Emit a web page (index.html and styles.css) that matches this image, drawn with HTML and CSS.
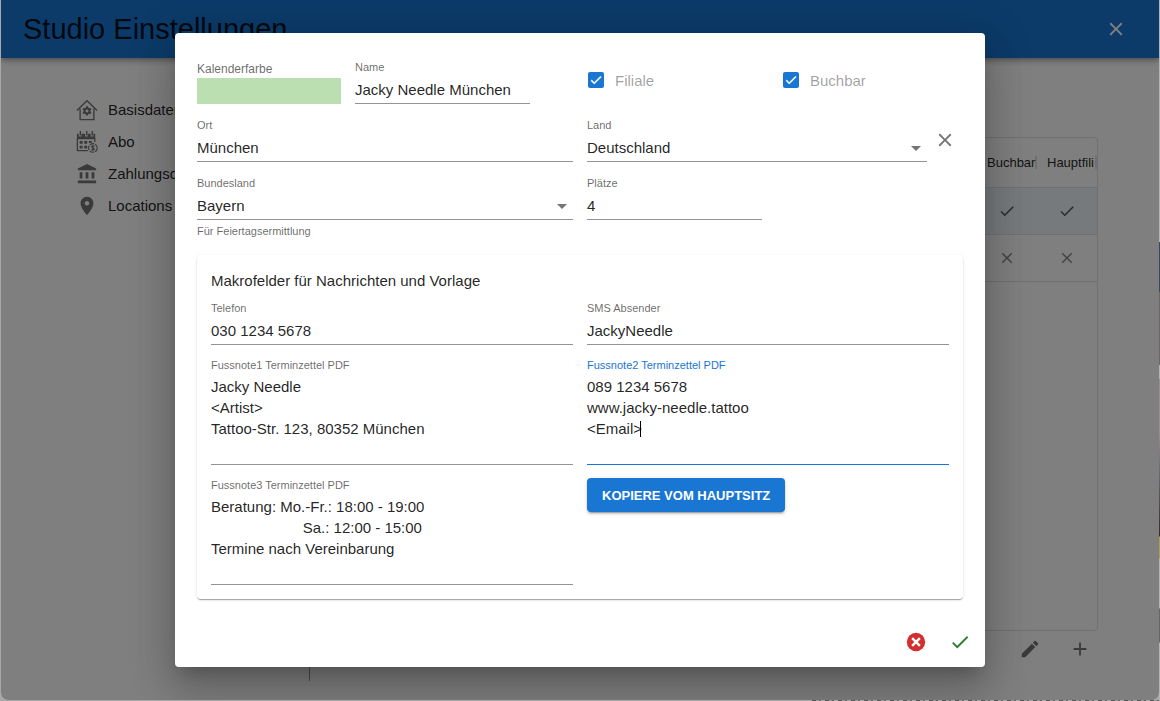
FILE: index.html
```html
<!DOCTYPE html>
<html lang="de">
<head>
<meta charset="utf-8">
<title>Studio Einstellungen</title>
<link rel="stylesheet" href="styles.css">
</head>
<body>
<svg width="0" height="0" class="sprite" aria-hidden="true">
  <symbol id="i-close" viewBox="0 0 24 24"><path d="M19 6.41 17.59 5 12 10.59 6.41 5 5 6.41 10.59 12 5 17.59 6.41 19 12 13.41 17.59 19 19 17.59 13.41 12z"/></symbol>
  <symbol id="i-check" viewBox="0 0 24 24"><path d="M9 16.17 4.83 12l-1.42 1.41L9 19 21 7l-1.41-1.41z"/></symbol>
  <symbol id="i-cancel" viewBox="0 0 24 24"><circle cx="12" cy="12" r="10"/><path fill="none" stroke="#fff" stroke-width="2.600" d="M7.800 7.800l8.400 8.400M16.200 7.800l-8.400 8.400"/></symbol>
  <symbol id="i-edit" viewBox="0 0 24 24"><path d="M3 17.25V21h3.75L17.81 9.94l-3.75-3.75zM20.71 7.04c.39-.39.39-1.02 0-1.41l-2.34-2.34a.9959.9959 0 0 0-1.41 0l-1.83 1.83 3.75 3.75z"/></symbol>
  <symbol id="i-add" viewBox="0 0 24 24"><path d="M19 13h-6v6h-2v-6H5v-2h6V5h2v6h6z"/></symbol>
  <symbol id="i-place" viewBox="0 0 24 24"><path d="M12 2C8.13 2 5 5.13 5 9c0 5.25 7 13 7 13s7-7.75 7-13c0-3.87-3.13-7-7-7m0 9.5c-1.38 0-2.5-1.12-2.5-2.5s1.12-2.5 2.5-2.5 2.5 1.12 2.5 2.5-1.12 2.5-2.5 2.5"/></symbol>
  <symbol id="i-bank" viewBox="0 0 24 24"><path d="M4 10v7h3v-7zm6.500 0v7h3v-7zM2 22h20v-3H2zm15-12v7h3v-7zM12 1 2 6v2h20V6z"/></symbol>
  <symbol id="i-home" viewBox="0 0 24 24"><path fill="none" stroke="currentColor" stroke-width="1.500" d="M1 12.500 12 1.800 23 12.500M4.500 10.500V22.500h15V10.500"/><circle cx="12" cy="13" r="2.700" fill="none" stroke="currentColor" stroke-width="2.200"/><path fill="none" stroke="currentColor" stroke-width="2.400" d="M12 8v2.500M12 15.500V18M7.700 10.500l2.100 1.200M14.200 14.300l2.100 1.200M7.700 15.500l2.100-1.200M14.200 11.700l2.100-1.200"/></symbol>
  <symbol id="i-abo" viewBox="0 0 24 24"><path d="M1 3h2v3h3V3h4v3h3V3h3v3h3V3h2v6H1zM4 0h1.500v5H4zM11 0h1.500v5H11zM17 0h1.500v5H17zM4 11h3.200v3H4zM9 11h3.200v3H9zM14 11h3.200v2H14zM4 16h3.200v3H4zM9 16h3.200v3H9z"/><path fill="none" stroke="currentColor" stroke-width="1.400" d="M1.500 8v13.500H13M20.500 8v4"/><circle cx="18.500" cy="18.500" r="4.700" fill="none" stroke="currentColor" stroke-width="1.300" stroke-dasharray="5 1"/><path fill="none" stroke="currentColor" stroke-width="1.200" d="M20 16.800c-1-1-3-.7-3 .5s3 1.100 3 2.400-2 1.500-3 .4M18.500 15.300v6.400"/></symbol>
</svg>

<div class="window">
  <header class="appbar">
    <h1 class="appbar-title">Studio Einstellungen</h1>
    <button class="icon-button appbar-close" type="button" aria-label="Schließen"><svg class="icon"><use href="#i-close"/></svg></button>
  </header>

  <div class="main">
    <nav class="nav">
      <a class="nav-item" href="#basis"><svg class="nav-icon"><use href="#i-home"/></svg>Basisdaten</a>
      <a class="nav-item" href="#abo"><svg class="nav-icon"><use href="#i-abo"/></svg>Abo</a>
      <a class="nav-item" href="#zahlung"><svg class="nav-icon"><use href="#i-bank"/></svg>Zahlungsdaten</a>
      <a class="nav-item" href="#locations"><svg class="nav-icon"><use href="#i-place"/></svg>Locations</a>
    </nav>
    <section class="locations">
      <div class="grid-frame">
        <table class="grid">
          <thead><tr><th class="grid-wide"></th><th>Buchbar</th><th>Hauptfili</th></tr></thead>
          <tbody>
            <tr class="selected"><td></td><td><svg class="cell-icon"><use href="#i-check"/></svg></td><td><svg class="cell-icon"><use href="#i-check"/></svg></td></tr>
            <tr><td></td><td><svg class="cell-icon cell-no"><use href="#i-close"/></svg></td><td><svg class="cell-icon cell-no"><use href="#i-close"/></svg></td></tr>
          </tbody>
        </table>
      </div>
      <div class="toolbar">
        <button class="icon-button" type="button" aria-label="Bearbeiten"><svg class="icon"><use href="#i-edit"/></svg></button>
        <button class="icon-button" type="button" aria-label="Hinzufügen"><svg class="icon"><use href="#i-add"/></svg></button>
      </div>
    </section>
  </div>

  <div class="backdrop">
    <form class="dialog" role="dialog" aria-label="Location">
      <div class="content">
        <div class="row">
          <div class="name-group">
            <div class="color-field">
              <label class="color-label" for="farbe">Kalenderfarbe</label>
              <button class="swatch" id="farbe" type="button"></button>
            </div>
            <div class="field half"><label for="name">Name</label><input id="name" value="Jacky Needle München"></div>
          </div>
          <div class="checks">
            <label class="check"><input type="checkbox" checked><svg class="check-mark"><use href="#i-check"/></svg><span>Filiale</span></label>
            <label class="check"><input type="checkbox" checked><svg class="check-mark"><use href="#i-check"/></svg><span>Buchbar</span></label>
          </div>
        </div>
        <div class="row">
          <div class="field"><label for="ort">Ort</label><input id="ort" value="München"></div>
          <div class="land-group">
            <div class="field"><label for="land">Land</label><div class="select"><select id="land"><option>Deutschland</option></select></div></div>
            <button class="icon-button" type="button" aria-label="Land löschen"><svg class="icon"><use href="#i-close"/></svg></button>
          </div>
        </div>
        <div class="row">
          <div class="field"><label for="bl">Bundesland</label><div class="select"><select id="bl"><option>Bayern</option></select></div><p class="helper">Für Feiertagsermittlung</p></div>
          <div class="field half"><label for="pl">Plätze</label><input id="pl" value="4"></div>
        </div>

        <div class="card">
          <h2 class="card-title">Makrofelder für Nachrichten und Vorlage</h2>
          <div class="card-grid">
            <div class="field"><label for="tel">Telefon</label><input id="tel" value="030 1234 5678"></div>
            <div class="field"><label for="sms">SMS Absender</label><input id="sms" value="JackyNeedle"></div>
            <div class="field"><label for="f1">Fussnote1 Terminzettel PDF</label><textarea id="f1" rows="4">Jacky Needle
&lt;Artist&gt;
Tattoo-Str. 123, 80352 München</textarea></div>
            <div class="field active"><label for="f2">Fussnote2 Terminzettel PDF</label><textarea id="f2" rows="4">089 1234 5678
www.jacky-needle.tattoo
&lt;Email&gt;</textarea><span class="caret"></span></div>
            <div class="field"><label for="f3">Fussnote3 Terminzettel PDF</label><textarea id="f3" rows="4">Beratung: Mo.-Fr.: 18:00 - 19:00
                      Sa.: 12:00 - 15:00
Termine nach Vereinbarung</textarea></div>
            <div><button class="copy" type="button">KOPIERE VOM HAUPTSITZ</button></div>
          </div>
        </div>
      </div>
      <div class="actions">
        <button class="icon-button cancel" type="button" aria-label="Abbrechen"><svg class="icon"><use href="#i-cancel"/></svg></button>
        <button class="icon-button confirm" type="button" aria-label="Speichern"><svg class="icon"><use href="#i-check"/></svg></button>
      </div>
    </form>
  </div>
</div>
</body>
</html>
```

FILE: styles.css
```css
* { box-sizing: border-box; }

body {
  margin: 0;
  height: 100vh;
  padding: 0 1px 1px;
  overflow: hidden;
  font-family: "Liberation Sans", Arial, sans-serif;
  font-size: 15px;
  color: rgba(0, 0, 0, 0.87);
  background:
    repeating-linear-gradient(90deg, #555 0 4px, #999 4px 7px, #666 7px 9px, #aaa 9px 13px) right bottom / 30% 1px no-repeat,
    linear-gradient(#b4b4b4 0 242px, #34495c 242px 292px, #6b6766 292px 365px, #b4b4b4 365px 379px, #998d99 379px 430px, #302e2b 536px, #a9a13f 537px 558px, #b4b4b4 559px 608px, #666 609px 642px, #b4b4b4 643px) right top / 1px 100% no-repeat,
    #a8a8a8;
}

button, input, select, textarea { font: inherit; color: inherit; }
button { cursor: pointer; }
.sprite { position: absolute; }

.window {
  position: relative;
  display: flex;
  flex-direction: column;
  height: 100%;
  overflow: hidden;
  background: #fff;
  border-radius: 0 0 7px 7px;
}

.appbar {
  display: flex;
  align-items: center;
  justify-content: space-between;
  height: 58px;
  flex: none;
  padding: 0 25px 0 22px;
  background: #1976d2;
  box-shadow: 0 2px 4px -1px rgba(0,0,0,.2), 0 4px 5px rgba(0,0,0,.14), 0 1px 10px rgba(0,0,0,.12);
}
.appbar-title { margin: 0; font-size: 29px; font-weight: 400; }

.icon-button {
  display: flex;
  align-items: center;
  justify-content: center;
  width: 36px;
  height: 36px;
  padding: 0;
  border: 0;
  background: none;
  color: #757575;
}
.icon { width: 22px; height: 22px; fill: currentColor; }
.appbar-close { color: #fff; }

.main { display: flex; flex: 1; min-height: 0; padding-bottom: 19px; }

.nav {
  width: 309px;
  flex: none;
  padding: 36px 0 0 75px;
  border-right: 1px solid #999;
}
.nav-item {
  display: flex;
  align-items: center;
  gap: 10px;
  line-height: 32px;
  color: inherit;
  text-decoration: none;
}
.nav-icon { width: 22px; height: 22px; fill: currentColor; color: #757575; }

.locations {
  display: flex;
  flex-direction: column;
  flex: 1;
  padding: 79px 61px 14px 20px;
}
.grid-frame { flex: 1; border: 1px solid #e0e0e0; border-radius: 4px; }
.grid { width: 100%; border-collapse: collapse; table-layout: fixed; font-size: 13px; }
.grid th, .grid td { width: 60px; border-bottom: 1px solid #e0e0e0; text-align: center; padding: 0; }
.grid .grid-wide { width: auto; }
.grid th {
  height: 49px;
  padding-left: 10px;
  font-weight: 400;
  text-align: left;
  background: linear-gradient(#e0e0e0, #e0e0e0) right center / 2px 13px no-repeat;
}
.grid td { height: 47px; }
.cell-icon { display: block; width: 18px; height: 18px; margin: 0 auto; fill: #555; }
.cell-no { fill: #888; }
.selected { background: rgba(25, 118, 210, 0.08); }

.toolbar { display: flex; justify-content: flex-end; gap: 14px; }

.backdrop {
  position: absolute;
  inset: 0;
  display: flex;
  align-items: center;
  justify-content: center;
  background: rgba(0, 0, 0, 0.5);
}
.dialog {
  width: 810px;
  max-width: 100%;
  background: #fff;
  border-radius: 4px;
  box-shadow: 0 11px 15px -7px rgba(0,0,0,.2), 0 24px 38px 3px rgba(0,0,0,.14), 0 9px 46px 8px rgba(0,0,0,.12);
}
.content { display: flex; flex-direction: column; gap: 14px; padding: 27px 22px 25px; }
.row, .card-grid { display: grid; grid-template-columns: 1fr 1fr; column-gap: 14px; }
.card-grid { row-gap: 13px; }

.field { display: flex; flex-direction: column; position: relative; min-width: 0; }
.field label { font-size: 11px; line-height: 15px; color: rgba(0, 0, 0, 0.6); }
.field input, .field select, .field textarea {
  display: block;
  width: 100%;
  margin: 0;
  padding: 0;
  border: 0;
  border-bottom: 1px solid #949494;
  border-radius: 0;
  outline: 0;
  background: none;
}
.field input, .field select { height: 29px; }
.field select { appearance: none; }
.field textarea { padding: 3px 0 4px; line-height: 21px; resize: none; overflow: hidden; }
.half { width: 175px; }
.field.active label { color: #1976d2; }
.field.active textarea { border-color: #1976d2; }
.caret { position: absolute; left: 53px; top: 63px; width: 1px; height: 16px; background: #000; }

.select { position: relative; }
.select::after {
  content: "";
  position: absolute;
  right: 6px;
  top: 13px;
  border: 5px solid transparent;
  border-top-color: #757575;
  border-bottom: 0;
  pointer-events: none;
}
.helper { margin: 4px 0 0; font-size: 11px; line-height: 14px; color: rgba(0, 0, 0, 0.6); }

.name-group { display: flex; gap: 14px; }
.color-field { display: flex; flex-direction: column; width: 144px; }
.color-label { font-size: 12px; line-height: 18px; color: rgba(0, 0, 0, 0.6); }
.swatch { flex: 1; border: 0; padding: 0; background: #bcdfb1; }

.checks { display: grid; grid-template-columns: 1fr 1fr; column-gap: 14px; align-items: center; padding-bottom: 4px; }
.check { position: relative; display: flex; align-items: center; gap: 10px; color: rgba(0, 0, 0, 0.38); }
.check input {
  appearance: none;
  width: 16px;
  height: 16px;
  margin: 0 1px;
  border-radius: 2px;
  background: #1976d2;
}
.check-mark { position: absolute; left: 2px; width: 14px; height: 14px; fill: #fff; stroke: #fff; pointer-events: none; }

.land-group { display: flex; align-items: center; }
.land-group .field { flex: 1; }

.card {
  margin-top: 3px;
  padding: 14px;
  border-radius: 4px;
  box-shadow: 0 2px 1px -1px rgba(0,0,0,.2), 0 1px 1px rgba(0,0,0,.14), 0 1px 3px rgba(0,0,0,.12);
}
.card-title { margin: 0 0 8px; font-size: 15px; font-weight: 400; line-height: 24px; }

.copy {
  height: 34px;
  padding: 0 15px;
  border: 0;
  border-radius: 4px;
  background: #1976d2;
  color: #fff;
  font-size: 13px;
  font-weight: 700;
  box-shadow: 0 3px 1px -2px rgba(0,0,0,.2), 0 2px 2px rgba(0,0,0,.14), 0 1px 5px rgba(0,0,0,.12);
}

.actions { display: flex; justify-content: flex-end; gap: 8px; padding: 0 7px 7px; }
.cancel { color: #d32f2f; }
.confirm { color: #2e7d32; }
```
